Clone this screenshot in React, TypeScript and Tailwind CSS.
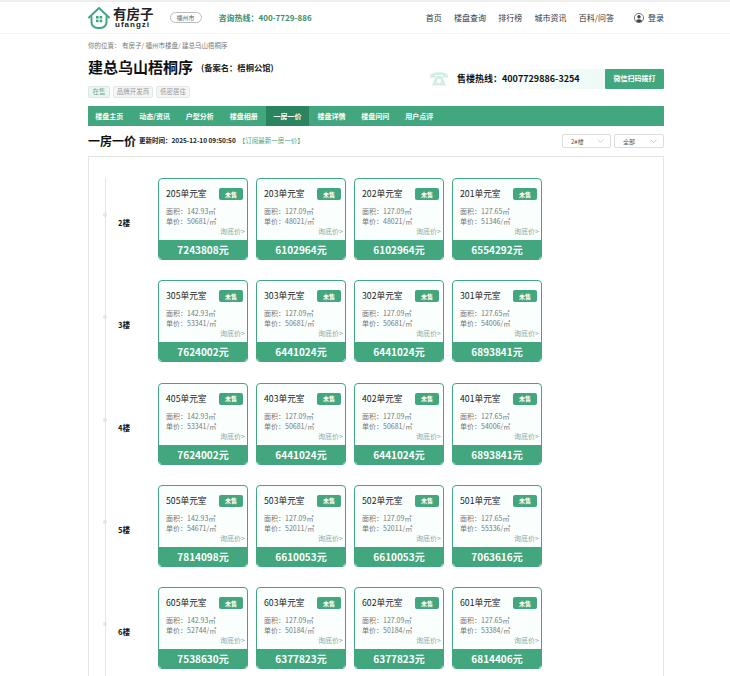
const rows = [
  { f: "2楼", u: [["205", "142.93", "50681", "7243808"], ["203", "127.09", "48021", "6102964"], ["202", "127.09", "48021", "6102964"], ["201", "127.65", "51346", "6554292"]] },
  { f: "3楼", u: [["305", "142.93", "53341", "7624002"], ["303", "127.09", "50681", "6441024"], ["302", "127.09", "50681", "6441024"], ["301", "127.65", "54006", "6893841"]] },
  { f: "4楼", u: [["405", "142.93", "53341", "7624002"], ["403", "127.09", "50681", "6441024"], ["402", "127.09", "50681", "6441024"], ["401", "127.65", "54006", "6893841"]] },
  { f: "5楼", u: [["505", "142.93", "54671", "7814098"], ["503", "127.09", "52011", "6610053"], ["502", "127.09", "52011", "6610053"], ["501", "127.65", "55336", "7063616"]] },
  { f: "6楼", u: [["605", "142.93", "52744", "7538630"], ["603", "127.09", "50184", "6377823"], ["602", "127.09", "50184", "6377823"], ["601", "127.65", "53384", "6814406"]] },
];

const tabs = ["楼盘主页", "动态/资讯", "户型分析", "楼盘相册", "一房一价", "楼盘详情", "楼盘问问", "用户点评"];
const links = ["首页", "楼盘查询", "排行榜", "城市资讯", "百科/问答"];

function Logo() {
  return (
    <svg width="22" height="24" viewBox="0 0 22 24" fill="none" className="shrink-0">
      <path d="M1 11.5 L11 2 L21 11.5" stroke="#42a77f" strokeWidth="2" strokeLinecap="round" strokeLinejoin="round" />
      <path d="M3.5 11 V16 A6 6 0 0 0 9.5 22 H12.5 A6 6 0 0 0 18.5 16 V11" stroke="#42a77f" strokeWidth="2" strokeLinecap="round" />
      <rect x="8" y="10" width="2.6" height="2.6" fill="#42a77f" />
      <rect x="11.6" y="10" width="2.6" height="2.6" fill="#42a77f" />
      <rect x="8" y="13.6" width="2.6" height="2.6" fill="#42a77f" />
      <rect x="11.6" y="13.6" width="2.6" height="2.6" fill="#42a77f" />
    </svg>
  );
}

function Chevron() {
  return (
    <svg width="7" height="4" viewBox="0 0 7 4" fill="none">
      <path d="M0.5 0.5 L3.5 3.5 L6.5 0.5" stroke="#bbbbbb" strokeWidth="0.7" />
    </svg>
  );
}

function Card({ d }: { d: string[] }) {
  return (
    <div className="relative flex h-[82px] w-[90px] flex-col overflow-hidden rounded-[4px] border border-[#42a77f] bg-[#fafffd]">
      <div className="flex h-[61px] flex-col pl-[7px] pr-[2px]">
        <div className="mt-[9px] flex h-[12px] items-center justify-between pr-[2px]">
          <span className="text-[8.7px] leading-[12px] text-[#222]">{d[0]}单元室</span>
          <span className="flex h-[12px] w-[24px] items-center justify-center rounded-[2px] bg-[#42a77f] text-[6px] font-bold text-white">未售</span>
        </div>
        <div className="mt-[6px] text-[7px] leading-[10px] text-[#777]">面积：{d[1]}㎡</div>
        <div className="text-[7px] leading-[10px] text-[#777]">单价：{d[2]}/㎡</div>
        <div className="text-right text-[7px] leading-[10px] text-[#93a99e]">询底价&gt;</div>
      </div>
      <div className="flex h-[19px] items-center justify-center bg-[#42a77f] text-[10px] font-bold text-white">{d[3]}元</div>
      <span className="absolute bottom-0 left-0 h-[2px] w-[2px] border-b border-l border-[#a9d8c4]" />
      <span className="absolute bottom-0 right-0 h-[2px] w-[2px] border-b border-r border-[#a9d8c4]" />
    </div>
  );
}

export default function App() {
  return (
    <div className="h-[676px] w-[730px] overflow-hidden bg-white font-['Noto_Sans_CJK_SC','Noto_Sans',sans-serif]">
      <div className="h-[2px] bg-[#eeeeee]" />
      <header className="flex h-[32px] items-center border-b border-[#f5f5f5] pl-[88px] pr-[66px]">
        <Logo />
        <div className="ml-[3px] flex flex-col">
          <span className="text-[13.5px] font-bold leading-[15px] text-[#222]">有房子</span>
          <span className="pl-[2px] font-['Liberation_Sans',sans-serif] text-[8px] font-bold leading-[8px] tracking-[1px] text-[#222]">ufangzi</span>
        </div>
        <span className="ml-[16px] flex h-[11px] w-[32px] items-center justify-center rounded-full border border-[#bbbbbb] text-[6px] text-[#666]">福州市</span>
        <span className="ml-[17px] text-[8px] font-bold text-[#3c8f6d]">咨询热线：400-7729-886</span>
        <nav className="ml-auto flex items-center gap-[12.3px] text-[8px] text-[#333]">
          {links.map((l) => (
            <span key={l}>{l}</span>
          ))}
        </nav>
        <svg width="10" height="10" viewBox="0 0 10 10" fill="none" className="ml-[20px]">
          <circle cx="5" cy="5" r="4.6" stroke="#444" strokeWidth="0.7" />
          <circle cx="5" cy="3.8" r="1.7" fill="#444" />
          <path d="M1.8 8.2 A3.4 3 0 0 1 8.2 8.2 L5 9.5 Z" fill="#444" />
        </svg>
        <span className="ml-[4px] text-[8px] text-[#333]">登录</span>
      </header>

      <main className="mx-[88px] w-[576px]">
        <div className="mt-[6px] text-[6.5px] leading-[10px] text-[#777]">你的位置： 有房子/ 福州市楼盘/ 建总乌山梧桐序</div>
        <div className="mt-[6px] flex items-center justify-between">
          <div>
            <div className="flex h-[22px] items-center">
              <h1 className="text-[15px] font-bold leading-[22px] text-[#111]">建总乌山梧桐序</h1>
              <span className="ml-[8px] text-[8.3px] font-bold text-[#222]">(备案名：梧桐公馆)</span>
            </div>
            <div className="mt-[8px] flex gap-[3px] text-[6.5px] text-[#999]">
              <span className="flex h-[12px] w-[22px] items-center justify-center rounded-[2px] border border-[#d8eae2] bg-[#eaf6f1] text-[#6aa58c]">在售</span>
              <span className="flex h-[12px] w-[40px] items-center justify-center rounded-[2px] border border-[#e6e6e6] bg-[#f5f5f5]">品牌开发商</span>
              <span className="flex h-[12px] w-[34px] items-center justify-center rounded-[2px] border border-[#e6e6e6] bg-[#f5f5f5]">低密居住</span>
            </div>
          </div>
          <div className="mt-[3px] flex h-[20px] items-center">
            <svg width="18" height="15" viewBox="0 0 18 15" fill="#d3eee3">
              <path d="M0 5 C0 0 18 0 18 5 V6.5 H13 V4 H5 V6.5 H0 Z" />
              <path d="M5 7 L6 5 H12 L13 7 L16 14.5 H2 Z" />
              <circle cx="9" cy="10" r="2.2" fill="#fff" />
            </svg>
            <div className="ml-[9px] flex h-[20px] w-[148px] items-center bg-gradient-to-r from-white to-[#edfaf6] text-[9px] font-bold text-[#111]">售楼热线：4007729886-3254</div>
            <div className="flex h-[20px] w-[59px] items-center justify-center rounded-[1px] bg-[#42a77f] text-[7px] font-bold text-white">微信扫码拨打</div>
          </div>
        </div>

        <nav className="mt-[8px] flex h-[20px] items-center gap-[1.3px] bg-[#42a77f] text-[7px] font-bold text-white">
          {tabs.map((t) => (
            <span key={t} className={`flex h-full items-center px-[7.3px] ${t === "一房一价" ? "bg-[#2b8460]" : ""}`}>
              {t}
            </span>
          ))}
        </nav>

        <div className="mt-[8px] flex h-[14px] items-center">
          <h2 className="text-[12px] font-bold leading-[14px] text-[#111]">一房一价</h2>
          <span className="ml-[3px] text-[6.5px] font-bold text-[#222]">更新时间：2025-12-10 09:50:50</span>
          <span className="ml-[3px] text-[6.5px] text-[#42a77f]">【订阅最新一房一价】</span>
          <div className="ml-auto flex gap-[3px]">
            <div className="flex h-[14px] w-[49px] items-center justify-between rounded-[2px] border border-[#dddddd] pl-[8px] pr-[6px] text-[6px] text-[#555]">
              2#楼
              <Chevron />
            </div>
            <div className="flex h-[14px] w-[50px] items-center justify-between rounded-[2px] border border-[#dddddd] pl-[8px] pr-[6px] text-[6px] text-[#555]">
              全部
              <Chevron />
            </div>
          </div>
        </div>

        <section className="mt-[8px] h-[560px] border border-[#e4e4e4] pl-[16px] pt-[21px]">
          <div className="border-l-[1.5px] border-[#e4e4e4]">
            {rows.map((r) => (
              <div key={r.f} className="relative flex h-[102.3px]">
                <span className="absolute -left-[3px] top-[35px] h-[4px] w-[4px] rounded-full bg-[#e4e4e4]" />
                <div className="w-[52px] pl-[12px] pt-[39px] text-[7.5px] font-bold leading-[12px] text-[#111]">{r.f}</div>
                <div className="flex gap-[8px]">
                  {r.u.map((d) => (
                    <Card key={d[0]} d={d} />
                  ))}
                </div>
              </div>
            ))}
          </div>
        </section>
      </main>
    </div>
  );
}
